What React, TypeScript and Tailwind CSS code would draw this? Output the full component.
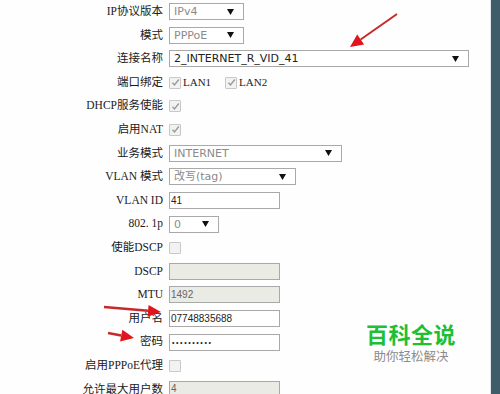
import React from "react";

const labelFont = { fontFamily: "'Liberation Serif', 'Noto Sans CJK SC', serif" };
const valFont = { fontFamily: "'DejaVu Sans', 'Noto Sans CJK SC', sans-serif" };
const smallFont = { fontFamily: "'Liberation Sans', sans-serif" };

function Arrow() {
  return (
    <svg width="7" height="6" viewBox="0 0 7 6" className="shrink-0">
      <path d="M0 0 H7 L3.5 6 Z" fill="#111" />
    </svg>
  );
}

function Select({ w, text, dark }: { w: number; text: string; dark?: boolean }) {
  return (
    <div
      className="h-[17px] border border-[#a9a9a9] bg-white flex items-center justify-between pl-[4px] pr-[9px]"
      style={{ width: w }}
    >
      <span
        className={`text-[11px] leading-none ${dark ? "text-[#222]" : "text-[#8a8a8a]"}`}
        style={valFont}
      >
        {text}
      </span>
      <Arrow />
    </div>
  );
}

function Input({ text, gray, pwd }: { text?: string; gray?: boolean; pwd?: boolean }) {
  return (
    <div
      className={`h-[17px] w-[111px] border border-[#a9a9a9] flex items-center pl-[1px] ${
        gray ? "bg-[#ebebe6]" : "bg-white"
      }`}
    >
      {pwd ? (
        <span className="text-[7px] leading-none text-[#222] tracking-[1.6px] pl-[1px]" style={smallFont}>
          ••••••••••
        </span>
      ) : (
        <span className={`text-[10px] leading-none ${gray ? "text-[#666]" : "text-[#222]"}`} style={smallFont}>
          {text}
        </span>
      )}
    </div>
  );
}

function Check({ checked }: { checked?: boolean }) {
  return (
    <div className="w-[12px] h-[12px] border border-[#c8c8c8] bg-[#f2f2f2] flex items-center justify-center rounded-[1px]">
      {checked && (
        <svg width="9" height="9" viewBox="0 0 9 9">
          <path d="M1.5 4.8 L3.5 7 L7.8 1.5" stroke="#9a9a9a" strokeWidth="1.4" fill="none" />
        </svg>
      )}
    </div>
  );
}

function Row({ label, children }: { label: string; children?: React.ReactNode }) {
  return (
    <div className="flex items-center h-[23.6px] shrink-0">
      <div className="w-[163px] text-right text-[11.5px] leading-none text-[#1a1a1a] whitespace-nowrap" style={labelFont}>
        {label}
      </div>
      <div className="ml-[6px] flex items-center">{children}</div>
    </div>
  );
}

function RedArrow({ x1, y1, x2, y2, w = 2 }: { x1: number; y1: number; x2: number; y2: number; w?: number }) {
  const dx = x2 - x1;
  const dy = y2 - y1;
  const len = Math.sqrt(dx * dx + dy * dy);
  const ux = dx / len;
  const uy = dy / len;
  const hl = 13;
  const hw = 6;
  const bx = x2 - ux * hl;
  const by = y2 - uy * hl;
  const px = -uy;
  const py = ux;
  return (
    <g>
      <line x1={x1} y1={y1} x2={bx} y2={by} stroke="#c8282a" strokeWidth={w} />
      <polygon
        points={`${x2},${y2} ${bx + px * hw},${by + py * hw} ${bx - px * hw},${by - py * hw}`}
        fill="#e0141c"
      />
    </g>
  );
}

export default function App() {
  return (
    <div className="w-[500px] h-[394px] flex overflow-hidden bg-white relative">
      <div className="flex-1 bg-[#fefefe] flex flex-col overflow-hidden">
        <Row label="IP协议版本">
          <Select w={75} text="IPv4" />
        </Row>
        <Row label="模式">
          <Select w={75} text="PPPoE" />
        </Row>
        <Row label="连接名称">
          <Select w={300} text="2_INTERNET_R_VID_41" dark />
        </Row>
        <Row label="端口绑定">
          <Check checked />
          <span className="ml-[2px] text-[11px] leading-none text-[#222]" style={labelFont}>LAN1</span>
          <div className="ml-[14px]"><Check checked /></div>
          <span className="ml-[2px] text-[11px] leading-none text-[#222]" style={labelFont}>LAN2</span>
        </Row>
        <Row label="DHCP服务使能">
          <Check checked />
        </Row>
        <Row label="启用NAT">
          <Check checked />
        </Row>
        <Row label="业务模式">
          <Select w={173} text="INTERNET" />
        </Row>
        <Row label="VLAN 模式">
          <Select w={127} text="改写(tag)" />
        </Row>
        <Row label="VLAN ID">
          <Input text="41" />
        </Row>
        <Row label="802. 1p">
          <Select w={50} text="0" />
        </Row>
        <Row label="使能DSCP">
          <Check />
        </Row>
        <Row label="DSCP">
          <Input gray />
        </Row>
        <Row label="MTU">
          <Input gray text="1492" />
        </Row>
        <Row label="用户名">
          <Input text="07748835688" />
        </Row>
        <Row label="密码">
          <Input pwd />
        </Row>
        <Row label="启用PPPoE代理">
          <Check />
        </Row>
        <Row label="允许最大用户数">
          <Input gray text="4" />
        </Row>
      </div>
      <div className="w-[1px] bg-[#e4e8ea]" />
      <div className="w-[9px] bg-[#3f5c6b]" />

      <svg className="absolute left-0 top-0 pointer-events-none" width="500" height="394">
        <RedArrow x1={397} y1={14} x2={350} y2={47} />
        <RedArrow x1={104} y1={307} x2={161} y2={312} w={2.5} />
        <RedArrow x1={108} y1={333} x2={134} y2={338} w={2.5} />
      </svg>

      <div className="absolute left-[366px] top-[321px] flex flex-col items-center pointer-events-none">
        <div
          className="text-[22px] leading-[24px] font-bold text-[#1fbf35] tracking-[0.5px]"
          style={{ fontFamily: "'Noto Sans CJK SC', sans-serif" }}
        >
          百科全说
        </div>
        <div
          className="mt-[4px] text-[12.5px] leading-[14px] text-[#8a8a8a]"
          style={{ fontFamily: "'Noto Sans CJK SC', sans-serif" }}
        >
          助你轻松解决
        </div>
      </div>
    </div>
  );
}
